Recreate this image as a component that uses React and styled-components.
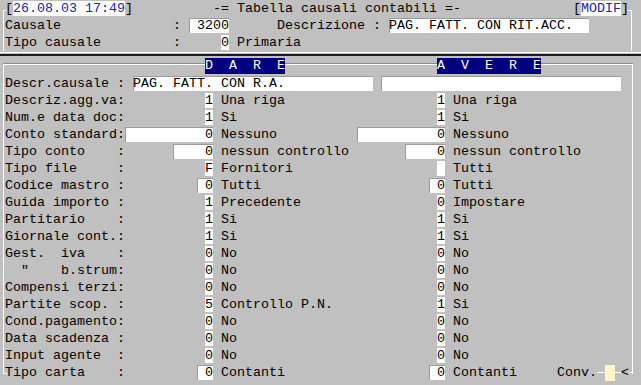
import React from "react";
import styled, { createGlobalStyle } from "styled-components";

const Global = createGlobalStyle`
  html, body {
    margin: 0;
    padding: 0;
    background: #c0c0c0;
  }
`;

const Screen = styled.div`
  width: 641px;
  height: 385px;
  overflow: hidden;
  background: #c0c0c0;
  color: #000;
  font-family: "Liberation Mono", "Courier New", monospace;
  font-size: 13.333px;
`;

// header panel, the frame corners sit on the top line behind the [date] / [MODIF] tags
const Header = styled.div`
  position: relative;
  z-index: 0;
  height: 51px;
  padding-left: 5px;

  &::before, &::after {
    content: '';
    position: absolute;
    z-index: -1;
    top: 10px;
    width: 3px;
    height: 40px;
    border-top: 1px solid #fff;
  }
  &::before {
    left: 3px;
    border-left: 1px solid #fff;
  }
  &::after {
    left: 628px;
    border-right: 1px solid #fff;
  }
`;

const Separator = styled.div`
  height: 1px;
  margin-top: 1px;
  border-top: 1px solid #fff;
  border-bottom: 2px solid #1a1a1a;
`;

const Body = styled.div`
  position: relative;
  z-index: 0;
  margin-top: 2px;
  padding-left: 5px;

  &::before {
    content: '';
    position: absolute;
    z-index: -1;
    left: 3px;
    top: 6px;
    width: 628px;
    height: 309px;
    border: 1px solid #fff;
    border-bottom: none;
    box-shadow: 0 -1px 0 #8c8c8c;
  }
  &::after {
    content: '';
    position: absolute;
    z-index: -1;
    left: 3px;
    top: 315px;
    width: 4px;
    height: 1px;
    background: #fff;
  }
`;

const Row = styled.div`
  display: grid;
  grid-template-columns: repeat(80, 8px);
  height: 17px;
  align-items: center;
`;

const Text = styled.span`
  grid-row: 1;
  grid-column: ${p => p.$col + 1} / span ${p => p.$span};
  white-space: pre;
  line-height: 15px;
`;

const Box = styled.span`
  grid-row: 1;
  grid-column: ${p => p.$col + 1} / span ${p => p.$span};
  height: 15px;
  line-height: 15px;
  background: #fff;
  white-space: pre;
  overflow: hidden;
  text-align: ${p => (p.$right ? "right" : "left")};
  color: ${p => (p.$hi ? "#2222b0" : "#000")};
  box-shadow: ${p => (p.$flat ? "none" : "inset 1px 1px 0 #9c9c9c")};
`;

const Band = styled.span`
  grid-row: 1;
  grid-column: ${p => p.$col + 1} / span ${p => p.$span};
  align-self: start;
  height: 16px;
  line-height: 16px;
  background: #000080;
  color: #fff;
  white-space: pre;
`;

const HLine = styled.span`
  grid-row: 1;
  grid-column: ${p => p.$col + 1} / span 1;
  justify-self: start;
  width: ${p => p.$w || 8}px;
  height: 1px;
  background: #fff;
`;

const Conv = styled.span`
  grid-row: 1;
  grid-column: ${p => p.$col + 1} / span 2;
  justify-self: start;
  width: 10px;
  height: 16px;
  background: #fff8c4;
`;

const T = ({ col, children }) => (
  <Text $col={col} $span={Math.max(1, String(children).length)}>
    {children}
  </Text>
);

const rows = [
  ["Descriz.agg.va:", ["1", 1, "Una riga"], ["1", 1, "Una riga"]],
  ["Num.e data doc:", ["1", 1, "Si"], ["1", 1, "Si"]],
  ["Conto standard:", ["0", 11, "Nessuno"], ["0", 11, "Nessuno"]],
  ["Tipo conto    :", ["0", 5, "nessun controllo"], ["0", 5, "nessun controllo"]],
  ["Tipo file     :", ["F", 1, "Fornitori"], ["", 1, "Tutti"]],
  ["Codice mastro :", ["0", 2, "Tutti"], ["0", 2, "Tutti"]],
  ["Guida importo :", ["1", 1, "Precedente"], ["0", 1, "Impostare"]],
  ["Partitario    :", ["1", 1, "Si"], ["1", 1, "Si"]],
  ["Giornale cont.:", ["1", 1, "Si"], ["1", 1, "Si"]],
  ["Gest.  iva    :", ["0", 1, "No"], ["0", 1, "No"]],
  ['  "    b.strum:', ["0", 1, "No"], ["0", 1, "No"]],
  ["Compensi terzi:", ["0", 1, "No"], ["0", 1, "No"]],
  ["Partite scop. :", ["5", 1, "Controllo P.N."], ["1", 1, "Si"]],
  ["Cond.pagamento:", ["0", 1, "No"], ["0", 1, "No"]],
  ["Data scadenza :", ["0", 1, "No"], ["0", 1, "No"]],
  ["Input agente  :", ["0", 1, "No"], ["0", 1, "No"]],
  ["Tipo carta    :", ["0", 2, "Contanti"], ["0", 2, "Contanti"]],
];

const Field = ({ end, data }) => {
  const [v, w, t] = data;
  return (
    <>
      <Box $col={end - w + 1} $span={w} $right $flat={w === 1}>
        {v}
      </Box>
      <T col={end + 2}>{t}</T>
    </>
  );
};

export default function App() {
  return (
    <Screen>
      <Global />
      <Header>
        <Row>
          <T col={0}>[</T>
          <Box $col={1} $span={14} $hi $flat>26.08.03 17:49</Box>
          <T col={15}>]</T>
          <T col={26}>-= Tabella causali contabili =-</T>
          <T col={71}>[</T>
          <Box $col={72} $span={5} $hi $flat>MODIF</Box>
          <T col={77}>]</T>
        </Row>
        <Row>
          <T col={0}>Causale</T>
          <T col={21}>:</T>
          <Box $col={23} $span={5} $right>3200</Box>
          <T col={34}>Descrizione :</T>
          <Box $col={48} $span={25}>PAG. FATT. CON RIT.ACC.</Box>
        </Row>
        <Row>
          <T col={0}>Tipo causale</T>
          <T col={21}>:</T>
          <Box $col={27} $span={1} $right $flat>0</Box>
          <T col={29}>Primaria</T>
        </Row>
      </Header>
      <Separator />
      <Body>
        <Row>
          <Band $col={25} $span={10}>D  A  R  E</Band>
          <Band $col={54} $span={13}>A  V  E  R  E</Band>
        </Row>
        <Row>
          <T col={0}>Descr.causale :</T>
          <Box $col={16} $span={30}>PAG. FATT. CON R.A.</Box>
          <Box $col={47} $span={30}></Box>
        </Row>
        {rows.map(([label, left, right], i) => (
          <Row key={i}>
            <T col={0}>{label}</T>
            <Field end={25} data={left} />
            <Field end={54} data={right} />
            {i === rows.length - 1 && (
              <>
                <T col={69}>Conv.</T>
                <HLine $col={74} />
                <Conv $col={75} />
                <HLine $col={76} />
                <T col={77}>{"<"}</T>
                <HLine $col={78} $w={4} />
              </>
            )}
          </Row>
        ))}
      </Body>
    </Screen>
  );
}
